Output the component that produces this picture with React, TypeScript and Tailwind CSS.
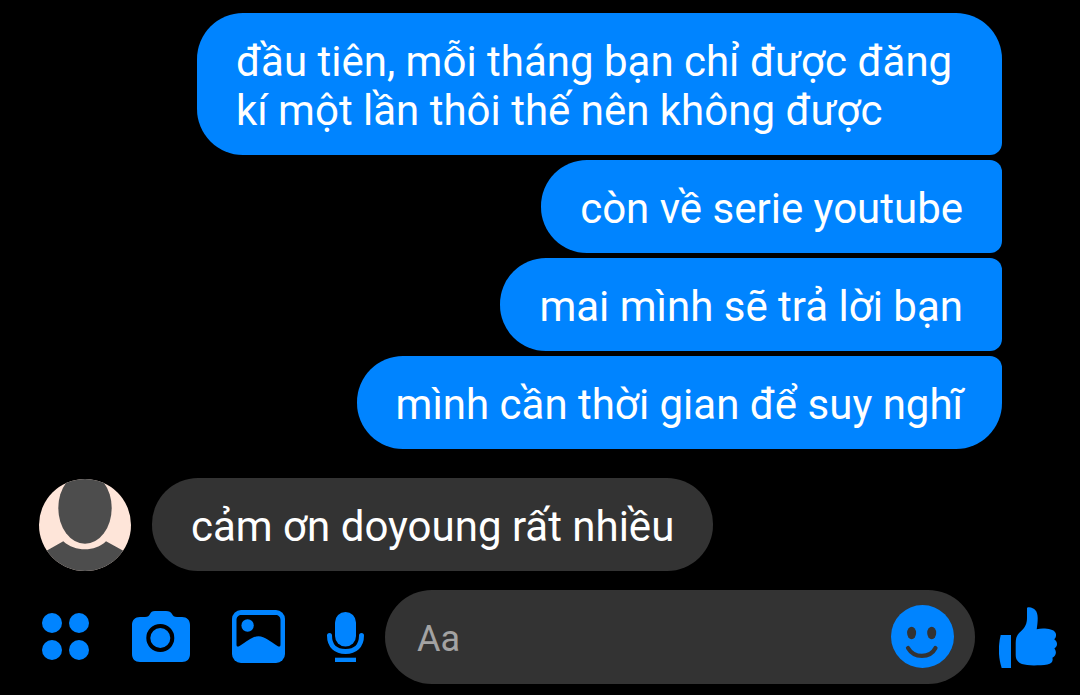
import { useState, type FormEvent } from 'react';
import clsx from 'clsx';

interface Message {
  id: number;
  text: string;
}

const sentMessages: Message[] = [
  { id: 1, text: 'đầu tiên, mỗi tháng bạn chỉ được đăng kí một lần thôi thế nên không được' },
  { id: 2, text: 'còn về serie youtube' },
  { id: 3, text: 'mai mình sẽ trả lời bạn' },
  { id: 4, text: 'mình cần thời gian để suy nghĩ' },
];

const receivedMessage: Message = { id: 5, text: 'cảm ơn doyoung rất nhiều' };

const AppsIcon = () => (
  <svg width="48" height="48" viewBox="0 0 48 48" fill="currentColor" aria-hidden="true">
    <circle cx="10" cy="10" r="10" />
    <circle cx="37" cy="10" r="10" />
    <circle cx="10" cy="37" r="10" />
    <circle cx="37" cy="37" r="10" />
  </svg>
);

const CameraIcon = () => (
  <svg width="58" height="52" viewBox="0 0 58 52" aria-hidden="true">
    <path
      fill="currentColor"
      d="M8 6h5c3 0 4-1 5-3 1-2 2-3 5-3h11c3 0 5 1 6 3s2 3 5 3h5c5 0 8 3 8 8v29c0 5-3 8-8 8H8c-5 0-8-3-8-8V14c0-5 3-8 8-8Z"
    />
    <circle cx="28.3" cy="27" r="12" fill="none" stroke="#000" strokeWidth="4" />
  </svg>
);

const GalleryIcon = () => (
  <svg width="53" height="54" viewBox="0 0 53 54" aria-hidden="true">
    <rect width="53" height="53" rx="9" fill="currentColor" />
    <path
      fill="#000"
      d="M9.500 5h34c3 0 5 2 5 5v24.500c0 2.500-1.500 2.500-3 1.500C38 31.500 33 26.300 26.500 26.300S15 31.500 7.500 36c-1.500 1-3 1-3-1.500V10c0-3 2-5 5-5Z"
    />
    <circle cx="15.600" cy="15.500" r="6.200" fill="currentColor" />
  </svg>
);

const MicIcon = () => (
  <svg width="37" height="50" viewBox="0 0 37 50" fill="currentColor" aria-hidden="true">
    <rect x="8" width="21" height="34.500" rx="10.500" />
    <path
      d="M2.500 23.500C2.500 34 9 39.500 18.500 39.500S34.500 34 34.500 23.500"
      fill="none"
      stroke="currentColor"
      strokeWidth="5"
      strokeLinecap="round"
    />
    <rect x="8" y="45.700" width="21" height="4.300" />
  </svg>
);

const SmileyIcon = () => (
  <svg width="63" height="64" viewBox="0 0 63 64" aria-hidden="true">
    <circle cx="31.500" cy="31.500" r="31.500" fill="currentColor" />
    <ellipse cx="20.600" cy="28" rx="4.500" ry="6.200" fill="#333" />
    <ellipse cx="40.700" cy="28" rx="4.500" ry="6.200" fill="#333" />
    <path
      d="M17 43C23 53.500 39 53.500 44.500 43"
      fill="none"
      stroke="#333"
      strokeWidth="4.200"
      strokeLinecap="round"
    />
  </svg>
);

const LikeIcon = () => (
  <svg width="58" height="61" viewBox="0 0 58 61" fill="currentColor" aria-hidden="true">
    <path d="M1.700 28H12v33H2.700C-1 50-.8 38 1.700 28Z" />
    <path d="M16.700 36c0-6 2-9 5-11.500 4.500-4 6.300-8 6.300-13.500V1.500C28 .5 28.800.2 30 .3c5.500.5 8.700 3.700 8.700 10.700 0 4-.4 7.500-1 11.200 3.500-.7 7-.7 10.300-.4 5.500.5 9.500 2.700 9 6.700-.1 1.700-.8 2.800-1.800 3.700 3.500 2.300 3.900 6.800.2 9.300 2.600 3.300 1.700 7.700-2 9.200 1 3.300-.7 6.100-5 6.800-4 .7-9 .9-13.400.9-11 0-18.300-1.900-18.300-10.400V36Z" />
  </svg>
);

const Avatar = () => (
  <svg
    width="92"
    height="92"
    viewBox="0 0 92 92"
    className="shrink-0 rounded-full bg-[#fee5d9]"
    fill="#4d4d4d"
    role="img"
    aria-label="doyoung"
  >
    <ellipse cx="46" cy="29" rx="26.700" ry="35.800" />
    <path d="M0 76 24.300 62.300C36 73 56 73 67 62.300L92 76V92H0Z" />
  </svg>
);

const bubble = 'max-w-[805px] px-[39px] pt-6 pb-5';
const iconButton = 'shrink-0 cursor-pointer text-[#0084ff]';

export default function App() {
  const [draft, setDraft] = useState('');

  const handleSubmit = (e: FormEvent) => {
    e.preventDefault();
    setDraft('');
  };

  return (
    <div className="min-h-screen bg-black pt-[13px] font-[Roboto,sans-serif] text-[42px] leading-[49px] text-white">
      <main>
        <div className="flex flex-col items-end gap-[5px] pr-[78px] pl-10">
          {sentMessages.map((message, index) => (
            <p
              key={message.id}
              className={clsx(
                bubble,
                'rounded-l-[46px] bg-[#0084ff]',
                index === 0 ? 'rounded-tr-[46px]' : 'rounded-tr-[12px]',
                index === sentMessages.length - 1 ? 'rounded-br-[46px]' : 'rounded-br-[12px]'
              )}
            >
              {message.text}
            </p>
          ))}
        </div>

        <div className="mt-[29px] flex items-end gap-[21px] px-[39px]">
          <Avatar />
          <p className={clsx(bubble, 'rounded-[46px] bg-[#333]')}>{receivedMessage.text}</p>
        </div>
      </main>

      <form onSubmit={handleSubmit} className="mt-[19px] flex items-center pr-[23px] pl-[42px]">
        <div className="mr-[21px] flex shrink-0 items-center gap-[42px]">
          <button type="button" aria-label="Apps" className={iconButton}>
            <AppsIcon />
          </button>
          <button type="button" aria-label="Camera" className={iconButton}>
            <CameraIcon />
          </button>
          <button type="button" aria-label="Gallery" className={iconButton}>
            <GalleryIcon />
          </button>
          <button type="button" aria-label="Voice" className={iconButton}>
            <MicIcon />
          </button>
        </div>
        <div className="mr-6 flex h-[94px] min-w-0 flex-1 items-center rounded-full bg-[#333] pr-[21px] pl-8">
          <input
            type="text"
            aria-label="Message"
            placeholder="Aa"
            value={draft}
            onChange={e => setDraft(e.target.value)}
            className="min-w-0 flex-1 bg-transparent pt-1 text-[36px] outline-none placeholder:text-[#a3a3a3]"
          />
          <button type="button" aria-label="Emoji" className={iconButton}>
            <SmileyIcon />
          </button>
        </div>
        <button type="button" aria-label="Like" className={iconButton}>
          <LikeIcon />
        </button>
      </form>
    </div>
  );
}
